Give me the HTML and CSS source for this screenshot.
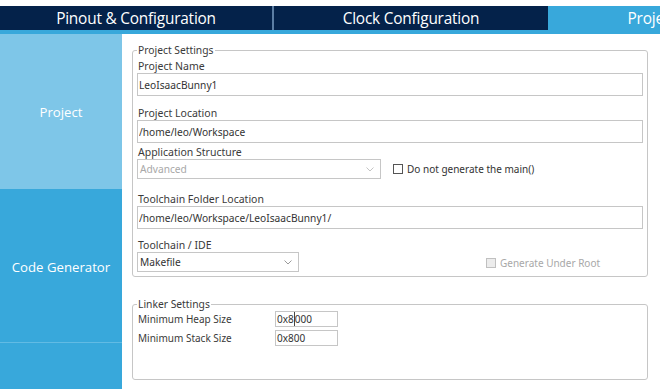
FILE: index.html
```html
<!DOCTYPE html>
<html lang="en">
<head>
  <meta charset="UTF-8" />
  <title>Project Manager</title>
  <link rel="stylesheet" href="styles.css">
</head>
<body>
  <div class="tabs">
    <div class="tab">Pinout &amp; Configuration</div>
    <div class="tab">Clock Configuration</div>
    <div class="tab active">Project Manager</div>
  </div>

  <div class="main">
    <nav class="side">
      <div class="side-item current">Project</div>
      <div class="side-item">Code Generator</div>
      <div class="side-item rest"></div>
    </nav>

    <div class="content">
      <fieldset class="group settings">
        <legend>Project Settings</legend>

        <label class="lbl first">Project Name</label>
        <input class="field" type="text" value="LeoIsaacBunny1">

        <label class="lbl gap-lg">Project Location</label>
        <input class="field" type="text" value="/home/leo/Workspace">

        <label class="lbl gap-sm">Application Structure</label>
        <div class="row">
          <div class="combo wide disabled">
            <span>Advanced</span>
            <svg width="8" height="5" viewBox="0 0 8 5"><polyline points="0.5,0.5 4,4 7.5,0.5" fill="none" stroke="#c4c4c4" stroke-width="1"/></svg>
          </div>
          <div class="check">
            <span class="box"></span>
            <span>Do not generate the main()</span>
          </div>
        </div>

        <label class="lbl gap-xl">Toolchain Folder Location</label>
        <input class="field" type="text" value="/home/leo/Workspace/LeoIsaacBunny1/">

        <label class="lbl gap-md">Toolchain / IDE</label>
        <div class="row">
          <div class="combo narrow">
            <span>Makefile</span>
            <svg width="8" height="5" viewBox="0 0 8 5"><polyline points="0.5,0.5 4,4 7.5,0.5" fill="none" stroke="#9a9a9a" stroke-width="1"/></svg>
          </div>
          <div class="check disabled root">
            <span class="box"></span>
            <span>Generate Under Root</span>
          </div>
        </div>
      </fieldset>

      <fieldset class="group linker">
        <legend>Linker Settings</legend>
        <div class="linker-grid">
          <span class="lbl">Minimum Heap Size</span>
          <div class="small-field">0x8<i class="caret"></i>000</div>
          <span class="lbl">Minimum Stack Size</span>
          <div class="small-field">0x800</div>
        </div>
      </fieldset>
    </div>
  </div>
</body>
</html>
```

FILE: styles.css
```css
:root {
  --navy: #04224a;
  --blue: #38a8db;
  --blue-light: #7ec6e8;
  --line: #c6c6c6;
  --text: #3a3a3a;
  --muted: #a8a8a8;
}

* {
  box-sizing: border-box;
}

html, body {
  margin: 0;
  height: 100%;
  overflow: hidden;
  background: #fff;
}

body {
  font-family: "Noto Sans", "Open Sans", sans-serif;
  color: var(--text);
}

/* top tab bar */
.tabs {
  display: flex;
  margin-top: 6px;
  height: 28px;
  background: var(--navy);
  border-bottom: 4px solid var(--blue);
  overflow: hidden;
  white-space: nowrap;
}

.tab {
  flex: 0 0 274px;
  display: flex;
  align-items: center;
  justify-content: center;
  color: #fff;
  font-family: "Open Sans", sans-serif;
  font-size: 15.4px;
  letter-spacing: -0.2px;
}

.tab:first-child {
  border-right: 2px solid #5c7ea4;
}

.tab.active {
  background: var(--blue);
}

/* body */
.main {
  display: flex;
  height: calc(100% - 34px);
}

.side {
  width: 122px;
  flex: none;
  display: flex;
  flex-direction: column;
  background: var(--blue);
}

.side-item {
  height: 154px;
  display: flex;
  align-items: center;
  justify-content: center;
  padding-top: 3px;
  color: #fff;
  font-family: "Open Sans", sans-serif;
  font-size: 13.2px;
  border-bottom: 1px solid #62bbe4;
}

.side-item.current {
  height: 155px;
  padding-top: 0;
  background: var(--blue-light);
  border-bottom: none;
}

.side-item.rest {
  flex: 1;
  border-bottom: none;
}

.content {
  flex: 1;
  padding: 11px 12px 0 10px;
}

/* groups */
.group {
  margin: 0;
  padding: 0 4px 4px 4px;
  border: 1px solid var(--line);
  border-radius: 3px;
}

.group legend {
  padding: 0 1px;
  margin-left: 0;
  font-size: 10.3px;
  line-height: 10px;
  color: var(--text);
}

.lbl {
  display: block;
  font-size: 10.5px;
  line-height: 12px;
  padding-left: 1px;
}

.lbl.first { margin-top: 5px; }
.lbl.gap-sm { margin-top: 3px; }
.lbl.gap-md { margin-top: 10px; }
.lbl.gap-lg { margin-top: 11px; }
.lbl.gap-xl { margin-top: 14px; }

.field {
  display: block;
  width: 100%;
  height: 23px;
  margin: 1px 0 0;
  padding: 0 1px;
  border: 1px solid var(--line);
  border-radius: 0;
  font-family: inherit;
  font-size: 10.2px;
  color: #333;
  background: #fff;
  outline: none;
}

.row {
  display: flex;
  align-items: center;
  margin-top: 1px;
}

.combo {
  height: 20px;
  display: flex;
  align-items: center;
  justify-content: space-between;
  padding: 0 6px 0 2px;
  border: 1px solid var(--line);
  font-size: 10.2px;
  color: #333;
}

.combo.wide { width: 244px; }
.combo.narrow { width: 162px; }

.combo.disabled {
  color: var(--muted);
}

.check {
  display: flex;
  align-items: center;
  gap: 4px;
  margin-left: 12px;
  font-size: 10px;
  color: #333;
}

.check .box {
  width: 10px;
  height: 10px;
  border: 1px solid #555;
  background: #fff;
}

.check.disabled {
  color: var(--muted);
}

.check.disabled .box {
  border-color: #c0c0c0;
  background: #ececec;
}

.check.root {
  margin-left: 187px;
  margin-top: 2px;
}

/* linker */
.linker {
  margin-top: 22px;
  padding-bottom: 33px;
}

.linker-grid {
  display: grid;
  grid-template-columns: 138px 63px;
  row-gap: 3px;
  align-items: center;
  margin-top: 2px;
}

.linker-grid .lbl {
  font-size: 10px;
}

.small-field {
  position: relative;
  height: 16px;
  padding: 0 1px;
  border: 1px solid var(--line);
  font-size: 10px;
  line-height: 14px;
  color: #333;
}

.caret {
  display: inline-block;
  width: 1px;
  height: 14px;
  margin: 0 0 -3px;
  background: #444;
}
```
